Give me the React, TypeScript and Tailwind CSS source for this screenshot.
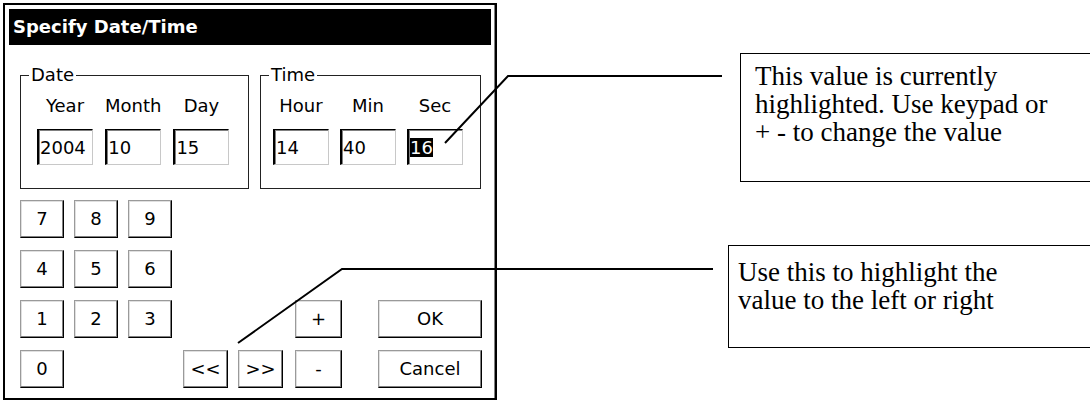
import React from "react";

const sans = "font-['DejaVu_Sans',sans-serif]";

function Btn({ label, w }: { label: string; w: string }) {
  return (
    <div
      className={`${w} h-[38px] flex items-center justify-center bg-white border border-t-[#9a9a9a] border-l-[#9a9a9a] border-b-black border-r-black shadow-[inset_-1px_-1px_0_#808080,inset_1px_1px_0_#e0e0e0] text-[18px] leading-none text-black`}
    >
      {label}
    </div>
  );
}

function Field({ value, highlight }: { value: string; highlight?: boolean }) {
  return (
    <div className="w-[56px] h-[36px] flex items-center pl-[1px] bg-white border-t border-l-2 border-r border-b border-t-black border-l-black border-r-[#c8c8c8] border-b-[#c8c8c8] shadow-[inset_1px_1px_0_#808080] text-[18px] leading-[19px]">
      {highlight ? <span className="bg-black text-white">{value}</span> : <span>{value}</span>}
    </div>
  );
}

function Group({
  title,
  w,
  padL,
  gap,
  items,
}: {
  title: string;
  w: string;
  padL: string;
  gap: string;
  items: { label: string; value: string; highlight?: boolean }[];
}) {
  return (
    <div className={`relative ${w} h-[114px] border border-[#222]`}>
      <span className="absolute -top-[11px] left-[8px] bg-white px-[2px] text-[18px] leading-[20px]">{title}</span>
      <div className={`flex ${padL} ${gap} pt-[20px]`}>
        {items.map((it) => (
          <div key={it.label} className="flex flex-col items-center">
            <div className="h-[20px] leading-[20px] text-[18px] whitespace-nowrap">{it.label}</div>
            <div className="mt-[13px]">
              <Field value={it.value} highlight={it.highlight} />
            </div>
          </div>
        ))}
      </div>
    </div>
  );
}

export default function App() {
  return (
    <div className="relative w-[1090px] h-[402px] overflow-hidden bg-white text-black flex">
      {/* Dialog */}
      <div className={`${sans} mt-[3px] ml-[3px] w-[494px] h-[397px] shrink-0 border-2 border-black shadow-[inset_-1px_0_0_#808080] p-[4px] flex flex-col`}>
        <div className="h-[36px] bg-black text-white font-bold text-[18px] leading-none flex items-center pl-[4px]">
          Specify Date/Time
        </div>
        <div className="flex gap-[11px] pl-[11px] mt-[30px]">
          <Group
            title="Date"
            w="w-[229px]"
            padL="pl-[16px]"
            gap="gap-[12px]"
            items={[
              { label: "Year", value: "2004" },
              { label: "Month", value: "10" },
              { label: "Day", value: "15" },
            ]}
          />
          <Group
            title="Time"
            w="w-[221px]"
            padL="pl-[12px]"
            gap="gap-[11px]"
            items={[
              { label: "Hour", value: "14" },
              { label: "Min", value: "40" },
              { label: "Sec", value: "16", highlight: true },
            ]}
          />
        </div>
        <div className="mt-[11px] ml-[11px] grid grid-cols-[54px_54px_55px_55px_57px_83px_104px] grid-rows-[38px_38px_38px_38px] gap-y-[12px]">
          <Btn label="7" w="w-[44px]" />
          <Btn label="8" w="w-[44px]" />
          <Btn label="9" w="w-[44px]" />
          <div />
          <div />
          <div />
          <div />

          <Btn label="4" w="w-[44px]" />
          <Btn label="5" w="w-[44px]" />
          <Btn label="6" w="w-[44px]" />
          <div />
          <div />
          <div />
          <div />

          <Btn label="1" w="w-[44px]" />
          <Btn label="2" w="w-[44px]" />
          <Btn label="3" w="w-[44px]" />
          <div />
          <div />
          <Btn label="+" w="w-[47px]" />
          <Btn label="OK" w="w-[104px]" />

          <Btn label="0" w="w-[44px]" />
          <div />
          <div />
          <Btn label="<<" w="w-[45px]" />
          <Btn label=">>" w="w-[45px]" />
          <Btn label="-" w="w-[47px]" />
          <Btn label="Cancel" w="w-[104px]" />
        </div>
      </div>

      {/* Annotations */}
      <div className="flex flex-col font-['Liberation_Serif',serif] text-[27px] leading-[28px] text-black">
        <div className="ml-[243px] mt-[53px] w-[360px] h-[129px] border-[1.5px] border-black pl-[14px] pt-[8px] whitespace-nowrap">
          This value is currently
          <br />
          highlighted. Use keypad or
          <br />+ - to change the value
        </div>
        <div className="ml-[231px] mt-[63px] w-[370px] h-[103px] border-[1.5px] border-black pl-[9px] pt-[12px] whitespace-nowrap">
          Use this to highlight the
          <br />
          value to the left or right
        </div>
      </div>

      {/* Callout lines */}
      <svg className="absolute left-0 top-0 pointer-events-none" width="1090" height="402" viewBox="0 0 1090 402">
        <polyline points="445,143 508,76 722,76" fill="none" stroke="black" strokeWidth="2" />
        <polyline points="238,343 342,269 713,269" fill="none" stroke="black" strokeWidth="2" />
      </svg>
    </div>
  );
}
